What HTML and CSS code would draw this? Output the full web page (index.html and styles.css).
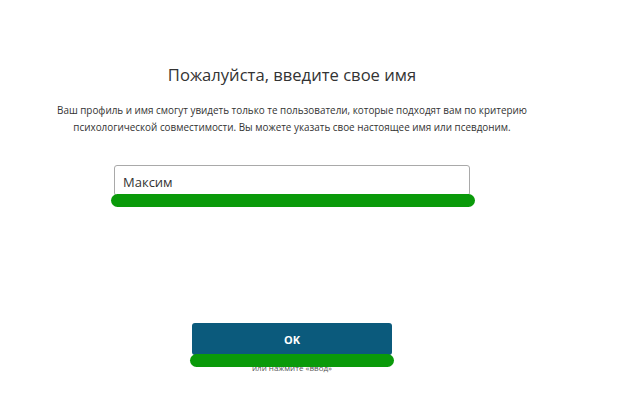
FILE: index.html
```html
<!DOCTYPE html>
<html lang="ru">
<head>
<meta charset="utf-8">
<link rel="stylesheet" href="styles.css">
</head>
<body>
<main class="page">
  <h1 class="title">Пожалуйста, введите свое имя</h1>
  <p class="lead">Ваш профиль и имя смогут увидеть только те пользователи, которые подходят вам по критерию<br>психологической совместимости. Вы можете указать свое настоящее имя или псевдоним.</p>
  <div class="field">
    <div class="input">Максим</div>
    <span class="mark mark-input"></span>
  </div>
  <div class="actions">
    <div class="btn-wrap">
      <button class="btn">OK</button>
      <span class="mark mark-btn"></span>
    </div>
    <div class="hint">или нажмите «ввод»</div>
  </div>
</main>
</body>
</html>
```
FILE: styles.css
```css
html, body {
  margin: 0;
  background: #fff;
}
.page {
  width: 584px;
  display: flex;
  flex-direction: column;
  align-items: center;
  font-family: "Open Sans", "Noto Sans", sans-serif;
  color: #333;
}
.title {
  margin: 64px 0 0;
  font-size: 16.6px;
  font-weight: 400;
  line-height: 22px;
  color: #333;
}
.lead {
  margin: 16px 0 0;
  font-size: 9.9px;
  line-height: 17px;
  text-align: center;
  color: #333;
}
.field {
  position: relative;
  margin-top: 29px;
  width: 356px;
}
.input {
  box-sizing: border-box;
  height: 31px;
  border: 1px solid #a9a9a9;
  border-radius: 3px;
  padding: 6px 8px 0;
  font-size: 13px;
  color: #333;
  line-height: 20px;
  text-align: left;
}
.mark {
  position: absolute;
  background: #0a9a0a;
  border-radius: 7px;
}
.mark-input {
  left: -3px;
  right: -5px;
  top: 29px;
  height: 13px;
}
.actions {
  margin-top: 127px;
  display: flex;
  flex-direction: column;
  align-items: center;
}
.btn-wrap {
  position: relative;
  width: 200px;
}
.btn {
  display: block;
  width: 200px;
  height: 32px;
  border: 0;
  border-radius: 3px;
  background: #0b5a7c;
  color: #fff;
  font-family: "Open Sans", sans-serif;
  font-weight: 700;
  font-size: 11px;
  padding: 0;
}
.mark-btn {
  left: -2px;
  right: -2px;
  top: 31px;
  height: 13px;
}
.hint {
  margin-top: 8px;
  font-size: 8px;
  line-height: 10px;
  color: #555;
}
```
